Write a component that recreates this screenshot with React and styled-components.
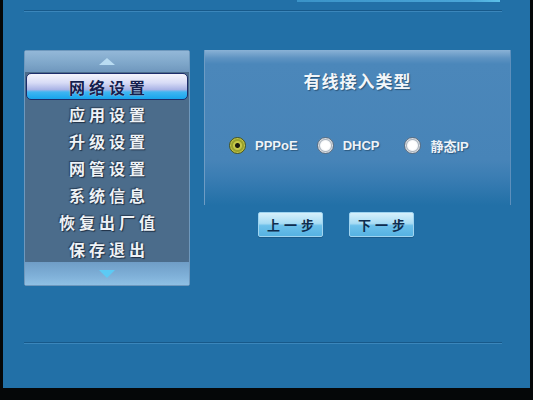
import React from "react";
import styled, { createGlobalStyle } from "styled-components";

const GlobalStyle = createGlobalStyle`
  html, body {
    margin: 0;
    padding: 0;
    background: #050708;
  }
  body {
    font-family: "Noto Sans CJK SC", "Liberation Sans", sans-serif;
  }
`;

const Frame = styled.div`
  width: 533px;
  height: 400px;
  background: #050708;
  overflow: hidden;
`;

const Screen = styled.div`
  margin-left: 3px;
  width: 527px;
  height: 388px;
  background: #2270a7;
  display: flex;
  flex-direction: column;
  padding-left: 21px;
  box-sizing: border-box;
`;

const TopBar = styled.div`
  margin-left: 273px;
  width: 203px;
  height: 2px;
  background: linear-gradient(90deg, #3a93c8, #4aa6d8 85%, #5cc0e8);
`;

const Rule = styled.div`
  width: 478px;
  height: 1px;
  margin-top: ${(p) => p.$top}px;
  background: #17598a;
  border-bottom: 1px solid #3b86bb;
`;

const Main = styled.div`
  display: flex;
  gap: 14px;
  margin-top: 38px;
  align-items: flex-start;
`;

const Menu = styled.div`
  width: 166px;
  height: 236px;
  display: flex;
  flex-direction: column;
  background: #4d6e8e;
  border: 1px solid #6e98bd;
  border-radius: 2px;
  box-sizing: border-box;
`;

const MenuCap = styled.div`
  height: ${(p) => p.$h}px;
  display: flex;
  align-items: center;
  justify-content: center;
  background: ${(p) =>
    p.$bottom
      ? "linear-gradient(180deg, #6f9dc6 0%, #7fb0d8 60%, #8fc0e4 100%)"
      : "linear-gradient(180deg, #93b8d8 0%, #7ea6c9 60%, #6f97bd 100%)"};
`;

const Arrow = styled.div`
  width: 0;
  height: 0;
  border-left: 8px solid transparent;
  border-right: 8px solid transparent;
  ${(p) =>
    p.$down
      ? "border-top: 8px solid #5ccaf4;"
      : "border-bottom: 7px solid #b9dcf2;"}
`;

const Items = styled.div`
  flex: 1;
  display: flex;
  flex-direction: column;
  padding-top: 1px;
  border-radius: 0 0 6px 6px;
  background: #4b6c8b;
`;

const Item = styled.div`
  height: 27px;
  margin: 0 1px;
  display: flex;
  align-items: center;
  justify-content: center;
  font-size: 16px;
  font-weight: 700;
  letter-spacing: 4px;
  padding-left: 4px;
  box-sizing: border-box;
  color: ${(p) => (p.$active ? "#14204e" : "#eef2f6")};
  text-shadow: ${(p) =>
    p.$active
      ? "0 0 1px #ffffff"
      : "1px 1px 1px #1e2f44, -1px -1px 1px #2a3e55"};
  border-radius: ${(p) => (p.$active ? "5px" : "0")};
  border: ${(p) => (p.$active ? "1px solid #1d2d6b" : "1px solid transparent")};
  background: ${(p) =>
    p.$active
      ? "linear-gradient(180deg, #f4f4fc 0%, #d8dcf6 35%, #aab4e6 62%, #3fb6f2 72%, #18a4ec 100%)"
      : "transparent"};
`;

const Panel = styled.div`
  width: 307px;
  height: 155px;
  display: flex;
  flex-direction: column;
  align-items: center;
  background: linear-gradient(
    180deg,
    #8ab2d6 0px,
    #5e93c2 8px,
    #4b87ba 14px,
    #4784b8 110px,
    #3a7db3 128px,
    #2270a7 155px
  );
  border-left: 1px solid #6e9cc4;
  border-right: 1px solid #5d8fbc;
  box-sizing: border-box;
`;

const Title = styled.div`
  margin-top: 18px;
  font-size: 17px;
  font-weight: 700;
  color: #f2f6fa;
  letter-spacing: 1px;
  text-shadow: 1px 1px 1px #2b5478;
`;

const Options = styled.div`
  align-self: flex-start;
  margin-left: 24px;
  margin-top: 43px;
  display: flex;
  align-items: center;
`;

const Option = styled.div`
  display: flex;
  align-items: center;
  gap: 9px;
  margin-right: ${(p) => p.$gap}px;
  font-family: "Liberation Sans", "Noto Sans CJK SC", sans-serif;
  font-size: 13px;
  font-weight: 700;
  color: #eef3f8;
  text-shadow: 1px 1px 1px #2d5a80;
`;

const Radio = styled.span`
  width: 17px;
  height: 17px;
  border-radius: 50%;
  box-sizing: border-box;
  border: 1px solid ${(p) => (p.$on ? "#4a5418" : "#5e6e80")};
  background: ${(p) =>
    p.$on
      ? "radial-gradient(circle, #1a1a10 0 2px, #c6c84a 3px 4px, #9aa22c 5px 6px, #c0c44a 7px)"
      : "radial-gradient(circle, #ffffff 0 4px, #f2f4f6 5px, #aab4be 6px, #d8dde2 7px)"};
`;

const Buttons = styled.div`
  display: flex;
  gap: 26px;
  margin-top: 7px;
  margin-left: 54px;
`;

const Btn = styled.div`
  width: 65px;
  height: 25px;
  box-sizing: border-box;
  display: flex;
  align-items: center;
  justify-content: center;
  font-size: 13px;
  font-weight: 700;
  letter-spacing: 4px;
  padding-left: 4px;
  color: #0e2c4e;
  border: 1px solid #9fd4f0;
  border-radius: 2px;
  background: linear-gradient(180deg, #d6f0fb 0%, #a8dcf4 45%, #6cc0ea 55%, #56b2e2 100%);
  box-shadow: 0 1px 0 #1a5c8c;
`;

const Spacer = styled.div`
  flex: 1;
`;

const menu = ["网络设置", "应用设置", "升级设置", "网管设置", "系统信息", "恢复出厂值", "保存退出"];

export default function App() {
  return (
    <Frame>
      <GlobalStyle />
      <Screen>
        <TopBar />
        <Rule $top={8} />
        <Main>
          <Menu>
            <MenuCap $h={22}>
              <Arrow />
            </MenuCap>
            <Items>
              {menu.map((m, i) => (
                <Item key={m} $active={i === 0}>
                  {m}
                </Item>
              ))}
            </Items>
            <MenuCap $h={24} $bottom>
              <Arrow $down />
            </MenuCap>
          </Menu>
          <div>
            <Panel>
              <Title>有线接入类型</Title>
              <Options>
                <Option $gap={19}>
                  <Radio $on />
                  PPPoE
                </Option>
                <Option $gap={25}>
                  <Radio />
                  DHCP
                </Option>
                <Option $gap={0}>
                  <Radio />
                  静态IP
                </Option>
              </Options>
            </Panel>
            <Buttons>
              <Btn>上一步</Btn>
              <Btn>下一步</Btn>
            </Buttons>
          </div>
        </Main>
        <Rule $top={56} />
        <Spacer />
      </Screen>
    </Frame>
  );
}
